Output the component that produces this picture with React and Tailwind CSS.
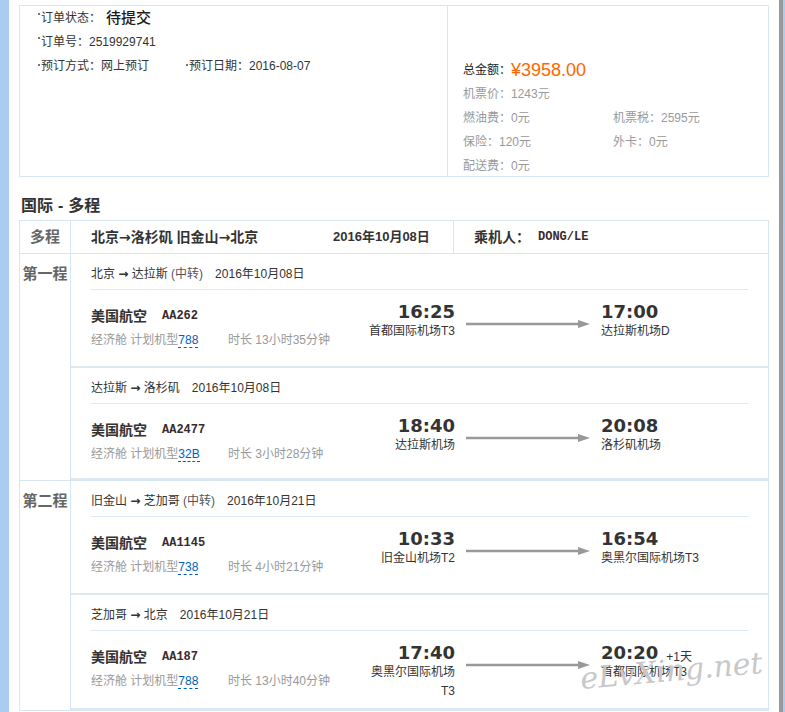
import React from "react";

const legs1 = [
  {
    route: ["北京", "达拉斯"],
    transfer: true,
    date: "2016年10月08日",
    flight: "AA262",
    type: "788",
    dur: "13小时35分钟",
    depT: "16:25",
    depA: "首都国际机场T3",
    arrT: "17:00",
    arrA: "达拉斯机场D",
    h: "h-[114px]",
  },
  {
    route: ["达拉斯", "洛杉矶"],
    transfer: false,
    date: "2016年10月08日",
    flight: "AA2477",
    type: "32B",
    dur: "3小时28分钟",
    depT: "18:40",
    depA: "达拉斯机场",
    arrT: "20:08",
    arrA: "洛杉矶机场",
    h: "h-[112px]",
  },
];

const legs2 = [
  {
    route: ["旧金山", "芝加哥"],
    transfer: true,
    date: "2016年10月21日",
    flight: "AA1145",
    type: "738",
    dur: "4小时21分钟",
    depT: "10:33",
    depA: "旧金山机场T2",
    arrT: "16:54",
    arrA: "奥黑尔国际机场T3",
    h: "h-[114px]",
  },
  {
    route: ["芝加哥", "北京"],
    transfer: false,
    date: "2016年10月21日",
    flight: "AA187",
    type: "788",
    dur: "13小时40分钟",
    depT: "17:40",
    depA: "奥黑尔国际机场T3",
    arrT: "20:20",
    plus: "+1天",
    arrA: "首都国际机场T3",
    h: "h-[115px]",
  },
];

function Dot() {
  return <span className="inline-block w-[2px] h-[2px] bg-[#777] mr-[1px] self-start mt-[7px]" />;
}

function Arrow() {
  return (
    <svg width="124" height="10" viewBox="0 0 124 10">
      <line x1="0" y1="5" x2="113" y2="5" stroke="#999" strokeWidth="2.5" />
      <polygon points="112,1 124,5 112,9" fill="#999" />
    </svg>
  );
}

function Leg({ l }) {
  return (
    <div className={`${l.h} border-b-2 border-[#dfe7ef] px-[20px]`}>
      <div className="h-[36px] pt-[12px] leading-[16px] border-b border-[#dde9f4] flex">
        <span>
          {l.route[0]} <span className="font-['DejaVu_Sans',sans-serif] font-bold">→</span> {l.route[1]}
          {l.transfer && <span className="text-[#555]"> (中转)</span>}
        </span>
        <span className="ml-[12px]">{l.date}</span>
      </div>
      <div className="flex">
        <div className="w-[274px] shrink-0 pt-[17px]">
          <div className="h-[18px] flex items-center">
            <span className="text-[14px] font-bold">美国航空</span>
            <span className="ml-[15px] font-['Liberation_Mono',monospace] font-bold text-[12px] text-[#3a2a2a]">
              {l.flight}
            </span>
          </div>
          <div className="h-[18px] mt-[6px] flex items-center text-[#999]">
            <span className="w-[137px] shrink-0">
              经济舱 计划机型
              <span className="text-[#0060c0] border-b border-dashed border-[#0060c0] leading-[13px]">
                {l.type}
              </span>
            </span>
            <span>时长 {l.dur}</span>
          </div>
        </div>
        <div className="w-[90px] shrink-0 pt-[12px] text-right">
          <div className="leading-[20px] text-[18px] font-bold font-['DejaVu_Sans',sans-serif] text-[#333]">
            {l.depT}
          </div>
          <div className="leading-[19px]">{l.depA}</div>
        </div>
        <div className="ml-[11px] w-[124px] shrink-0 pt-[29px]">
          <Arrow />
        </div>
        <div className="ml-[11px] pt-[12px]">
          <div className="leading-[20px] flex items-end">
            <span className="text-[18px] font-bold font-['DejaVu_Sans',sans-serif]">{l.arrT}</span>
            {l.plus && <span className="ml-[8px] text-[12px] leading-[16px] mb-[-2px]">{l.plus}</span>}
          </div>
          <div className="leading-[19px]">{l.arrA}</div>
        </div>
      </div>
    </div>
  );
}

export default function App() {
  return (
    <div className="relative flex h-[712px] w-[785px] overflow-hidden bg-white text-[12px] text-[#333] font-['Liberation_Sans','Noto_Sans_CJK_SC',sans-serif]">
      <div className="w-[9px] shrink-0 bg-[#a9cdf0]" />
      <div className="w-[770px] shrink-0 px-[10px] pt-[5px]">
        {/* top box */}
        <div className="h-[172px] border border-[#d6e6f5] flex">
          <div className="w-[428px] shrink-0 border-r border-[#d6e6f5] pl-[18px]">
            <div className="h-[24px] flex items-center">
              <Dot />
              <span>订单状态：</span>
              <span className="ml-[5px] text-[15px] text-[#221a1a] font-medium">待提交</span>
            </div>
            <div className="h-[24px] flex items-center">
              <Dot />
              <span>订单号：2519929741</span>
            </div>
            <div className="h-[24px] flex items-center">
              <div className="w-[148px] flex items-center">
                <Dot />
                <span>预订方式：网上预订</span>
              </div>
              <div className="flex items-center">
                <Dot />
                <span>预订日期：2016-08-07</span>
              </div>
            </div>
          </div>
          <div className="flex-1 pl-[15px] pt-[52px] text-[#999]">
            <div className="h-[24px] flex items-center">
              <span className="text-[#222]">总金额：</span>
              <span className="text-[18px] text-[#ff6600]">¥3958.00</span>
            </div>
            <div className="h-[24px] flex items-center">机票价：1243元</div>
            <div className="grid grid-cols-[150px_1fr]">
              <div className="h-[24px] flex items-center">燃油费：0元</div>
              <div className="h-[24px] flex items-center">机票税：2595元</div>
              <div className="h-[24px] flex items-center">保险：120元</div>
              <div className="h-[24px] flex items-center">外卡：0元</div>
              <div className="h-[23px] flex items-center">配送费：0元</div>
            </div>
          </div>
        </div>

        {/* title */}
        <div className="mt-[17px] h-[24px] leading-[24px] pl-[2px] text-[16px] font-bold text-[#333]">
          国际<span className="mx-[5px]">-</span>多程
        </div>

        {/* table */}
        <div className="mt-[2px] border border-[#d6e6f5]">
          <div className="h-[33px] flex border-b border-[#d6e6f5] items-stretch">
            <div className="w-[51px] shrink-0 border-r border-[#d6e6f5] flex items-center justify-center text-[15px] font-bold text-[#666]">
              多程
            </div>
            <div className="w-[383px] shrink-0 border-r border-[#d6e6f5] pl-[20px] flex items-center font-bold">
              <span className="w-[242px] shrink-0 text-[14px]">
                北京<span className="font-['DejaVu_Sans',sans-serif]">→</span>洛杉矶 旧金山
                <span className="font-['DejaVu_Sans',sans-serif]">→</span>北京
              </span>
              <span className="text-[13px]">2016年10月08日</span>
            </div>
            <div className="pl-[20px] flex items-center font-bold">
              <span className="text-[14px]">乘机人：</span>
              <span className="ml-[8px] font-['Liberation_Mono',monospace] text-[12px] text-[#3a2a2a]">DONG/LE</span>
            </div>
          </div>

          <div className="flex border-b border-[#d6e6f5]">
            <div className="w-[51px] shrink-0 border-r border-[#d6e6f5] pt-[10px] leading-[20px] text-center text-[15px] font-bold text-[#666]">
              第一程
            </div>
            <div className="flex-1">
              {legs1.map((l, i) => (
                <Leg key={i} l={l} />
              ))}
            </div>
          </div>

          <div className="flex">
            <div className="w-[51px] shrink-0 border-r border-[#d6e6f5] pt-[10px] leading-[20px] text-center text-[15px] font-bold text-[#666]">
              第二程
            </div>
            <div className="flex-1">
              {legs2.map((l, i) => (
                <Leg key={i} l={l} />
              ))}
            </div>
          </div>
        </div>
      </div>
      <div className="w-[4px] shrink-0 bg-[#999]" />
      <div className="w-[2px] shrink-0 bg-[#a9cdf0]" />

      <div className="absolute left-[580px] top-[652px] -rotate-[5deg] italic text-[30px] leading-[38px] text-[#c8c8c8] font-['DejaVu_Serif',serif] pointer-events-none">
        eLvXing.net
      </div>
    </div>
  );
}
